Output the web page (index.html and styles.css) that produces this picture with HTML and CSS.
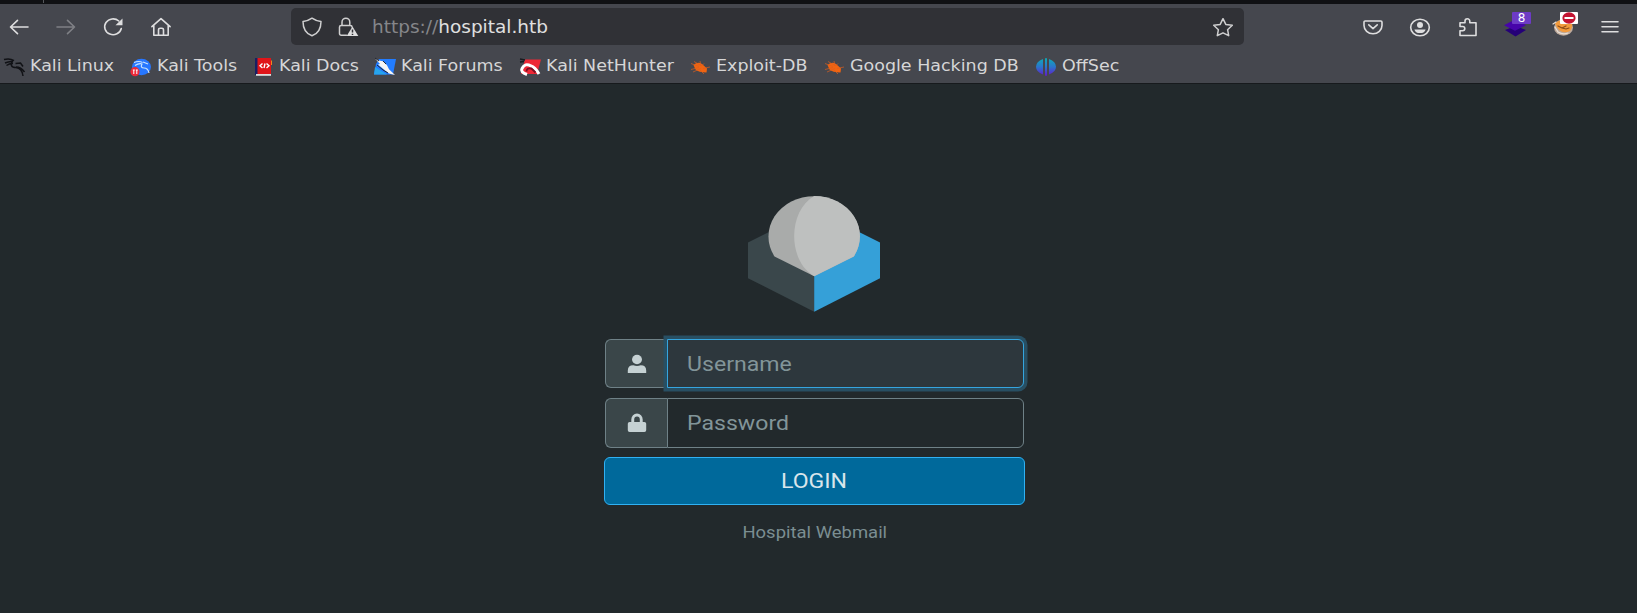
FILE: index.html
```html
<!DOCTYPE html>
<html lang="en">
<head>
<meta charset="utf-8">
<title>Hospital Webmail</title>
<link rel="stylesheet" href="styles.css">
</head>
<body>
<div class="tabstrip"><span class="tab-separator"></span></div>
<header class="chrome">
  <div class="toolbar">
    <nav class="nav-buttons">
      <svg class="icon" viewBox="0 0 20 20"><path d="M19 10H1.5M8.5 3.3 1.5 10l7 6.7"/></svg>
      <svg class="icon dim" viewBox="0 0 20 20"><path d="M1 10h17.5M11.5 3.3l7 6.7-7 6.7"/></svg>
      <svg class="icon" viewBox="0 0 20 20"><path d="M18.3 11.5A8.4 7.9 0 1 1 15.8 4"/><path class="solid" d="M19.5 1.6v6.6h-7z"/></svg>
      <svg class="icon" viewBox="0 0 20 20"><path d="M.9 9.7 10 1.6l9.1 8.1M2.8 8.5v9.8h14.4V8.5M7.5 18v-5.2q0-1.6 1.6-1.6h1.8q1.6 0 1.6 1.6V18"/></svg>
    </nav>
    <div class="urlbar">
      <svg class="icon" viewBox="0 0 20 20"><path d="M10 1.2q4.2 3 9 3.2c0 6.800-2.500 12-9 14.400C3.500 16.400 1 11.200 1 4.400q4.800-.2 9-3.200z"/></svg>
      <svg class="icon lock" viewBox="0 0 20 20"><path d="M8.500 18.200H3.200q-1.700 0-1.700-1.700V10q0-1.600 1.700-1.600h9.300q1.500 0 1.500 1.600M4 8.300V5.200a3.900 4 0 0 1 7.800 0v3.100"/><path class="solid" d="M14.500 9.600 20.300 19H8.700z"/><path class="mark" d="M14.500 12.400v3.200M14.500 16.700v1.200"/></svg>
      <span class="url"><span class="wide"><span class="scheme">https://</span>hospital.htb</span></span>
      <svg class="icon star" viewBox="0 0 22 20"><path d="m11 1.700 2.800 5.700 6.500.9-4.700 4.400 1.100 6-5.700-2.900-5.700 2.900 1.100-6L1.700 8.300l6.500-.9z"/></svg>
    </div>
    <div class="actions">
      <svg class="icon" viewBox="0 0 22 20"><path d="M3.200 4h15.600q1.200 0 1.200 1.200V8.500a9 8.300 0 0 1-18 0V5.200Q2 4 3.200 4zM6.800 7.900l4.200 3.700 4.200-3.700"/></svg>
      <svg class="icon" viewBox="0 0 22 20"><ellipse cx="11" cy="10.500" rx="9.300" ry="8.300"/><circle class="solid" cx="11" cy="7.900" r="3"/><path class="solid" d="M5.400 12.400h11.200q-.8 3.700-5.600 3.700t-5.600-3.700z"/></svg>
      <svg class="icon" viewBox="0 0 22 20"><path d="M3 18.500v-4.800h2.700a2 2 0 0 0 0-4.200H3V5.800h5V4.200a2.400 2.500 0 0 1 4.800 0v1.600h6.200v12.700z"/></svg>
      <div class="extension">
        <svg class="icon" viewBox="0 0 22 20"><path class="layer-low" d="m1 13 10.500-4L22 13l-10.500 6.500z"/><path class="layer-top" d="m0 8.200 11-5.700 11 5.700-11 5.500z"/></svg>
        <span class="badge count">8</span>
      </div>
      <div class="extension">
        <svg class="icon cookie" viewBox="0 0 22 20"><ellipse class="crust" cx="11.500" cy="10.500" rx="9.500" ry="8.300"/><path class="glaze" d="M3 6q5-4 9-2t8 2q1 4-2 8-6 3-11-1-3-3-4-7z"/><path class="shine" d="m1 7 3-2M3 10l3 5q5 3 10 1"/><path class="face" d="m6 9 4 2 4-2M10 11l4 1 3-1"/></svg>
        <span class="badge blocked"><svg viewBox="0 0 18 12"><ellipse cx="9" cy="6" rx="6.600" ry="5.700" fill="#c31432"/><path d="M4.500 5h9v2h-9z" fill="#fff"/></svg></span>
      </div>
      <svg class="icon" viewBox="0 0 22 20"><path d="M3 4.800h16M3 9.800h16M3 14.800h16"/></svg>
    </div>
  </div>
  <nav class="bookmarks">
    <a class="bookmark linux"><svg viewBox="0 0 22 20"><path d="M1 2.500q6-1.500 10 1.200M2 6q4-2 8-1.500M3.500 8.500Q7 6 10 6.500M9.500 4Q6 10.500 13 10.500q6 .5 7 8.500M12.500 6.500l5-.5 2.500 3.500M13 10q5 0 8.500 5" fill="none" stroke="#111216" stroke-width="1.500"/></svg><span class="wide">Kali Linux</span></a>
    <a class="bookmark tools"><svg viewBox="0 0 22 20"><ellipse cx="11.500" cy="10" rx="9.500" ry="8.300" fill="#2777ff"/><path d="M4 5.500q5-2 8.500 0M5 8.500q4-2.500 7-1.500-2 4 2 4t5 5M13 5l5 2" fill="none" stroke="#c9e3ff" stroke-width="1.200"/><circle cx="5" cy="14.700" r="4.600" fill="#ed2939"/><path d="M2.800 13h2M3.800 13v4M5.800 13h2M6.800 13v4" stroke="#fff" stroke-width="1"/></svg><span class="wide">Kali Tools</span></a>
    <a class="bookmark docs"><svg viewBox="0 0 18 20"><path d="M0 1h5v17H0z" fill="#182064"/><path d="M2.500 1H16v16H2.500z" fill="#e01519"/><path d="M1 17h15v1.800H1z" fill="#ddd"/><path d="m16 3 1 1v4h-1z" fill="#ef8621"/><path d="M7.500 6.500 5 8.800l2.500 2.200M11.500 6.500 14 8.800l-2.500 2.200M10 6.500l-1 4.500" fill="none" stroke="#fff" stroke-width="1.400"/></svg><span class="wide">Kali Docs</span></a>
    <a class="bookmark forums"><svg viewBox="0 0 22 20"><path d="M5 2h17l-3 15.500H0L2 7z" fill="#227cff"/><path d="m1 10 12 7.500H0z" fill="#27a5ed"/><path d="m1 1.500 4 2 4 .8 4 4 2 4 6 5.700-6-1.500-5-4-6-5 2-.5z" fill="#f5f5f5"/><path d="m1 1 4 3M3 8l6 5 5 3M9 4l3 3" fill="none" stroke="#222733" stroke-width="1"/></svg><span class="wide">Kali Forums</span></a>
    <a class="bookmark nethunter"><svg viewBox="0 0 22 20"><path d="M6 2.500h16L18 17H2z" fill="#ed2835"/><path d="M1 2l5 1M1 5l4-.5" stroke="#191b20" stroke-width="1.500"/><path d="M8 17.500Q1 15 3 11.500 6 5.500 12 9q4 1 8 8" fill="none" stroke="#fff" stroke-width="3"/><path d="M7.500 14.500q0-4 5-3l4 4" fill="none" stroke="#771124" stroke-width="1.800"/></svg><span class="wide">Kali NetHunter</span></a>
    <a class="bookmark exploit"><svg viewBox="0 0 20 20"><path d="M3.500 8Q8 4 12 7l5 4.500-.5 4q-8 0-11-3z" fill="#f16411"/><path d="m1 6.500 8 3M4 4.500l7 4M1 12.500l8-2M3 15l8-3.500M10 4l1 5M14 6.500l-2 2M20 10l-7 1.500M10 13l4 4" stroke="#d95f20" stroke-width=".7"/></svg><span class="wide">Exploit-DB</span></a>
    <a class="bookmark google"><svg viewBox="0 0 20 20"><path d="M3.500 8Q8 4 12 7l5 4.500-.5 4q-8 0-11-3z" fill="#f16411"/><path d="m1 6.500 8 3M4 4.500l7 4M1 12.500l8-2M3 15l8-3.500M10 4l1 5M14 6.500l-2 2M20 10l-7 1.500M10 13l4 4" stroke="#d95f20" stroke-width=".7"/></svg><span class="wide">Google Hacking DB</span></a>
    <a class="bookmark offsec"><svg viewBox="0 0 20 20"><defs><linearGradient id="dusk" x2="0" y2="1"><stop stop-color="#0eabb5"/><stop offset=".5" stop-color="#2b75cc"/><stop offset="1" stop-color="#621bcb"/></linearGradient></defs><path d="M7 2v15.500Q0 15 0 9.800T7 2zM13 2v15.500Q20 15 20 9.800T13 2zM9 1.200h2v17.500H9z" fill="url(#dusk)"/></svg><span class="wide">OffSec</span></a>
  </nav>
</header>
<main class="login">
  <svg class="logo" viewBox="0 0 132 116">
    <path fill="#3a474b" d="M0 46.500 22 35.500 66.200 60v55.800L0 82.200z"/>
    <path fill="#35a0d8" d="M132 46.500 110 35.500 66.200 60v55.800L132 82.200z"/>
    <path fill="#a9abaa" d="M26.500 60.500A45.700 40.300 0 1 1 105.800 60.500L66.200 80.300z"/>
    <path fill="#bec0bf" d="M66.200 0A45.600 40.300 0 0 1 105.800 60.500L66.200 80.300C39.500 65 39.500 15 66.200 0z"/>
  </svg>
  <form class="form">
    <label class="field focused">
      <span class="prefix"><svg viewBox="0 0 20 20"><ellipse cx="10" cy="5.500" rx="5" ry="4.700"/><path d="M.8 19v-2.500q0-5.200 5.500-5.200 3.700 1.300 7.400 0 5.500 0 5.500 5.200V19z"/></svg></span>
      <span class="input"><span class="wide">Username</span></span>
    </label>
    <label class="field">
      <span class="prefix"><svg viewBox="0 0 20 20"><path fill-rule="evenodd" d="M4.300 9V6.500a5.700 6 0 0 1 11.400 0V9h1.700q1.800 0 1.800 1.800v6.400q0 1.800-1.800 1.800H2.600Q.8 19 .8 17.200v-6.400Q.8 9 2.600 9zM7.200 9h5.600V6.500a2.800 3 0 0 0-5.600 0z"/></svg></span>
      <span class="input"><span class="wide">Password</span></span>
    </label>
    <div class="submit"><span class="wide">LOGIN</span></div>
  </form>
  <div class="product"><span class="wide">Hospital Webmail</span></div>
</main>
</body>
</html>
```

FILE: styles.css
```css
* { box-sizing: border-box; }
body { margin: 0; height: 613px; overflow: hidden; background: #22292c; }
svg { display: block; flex: none; overflow: visible; }
.wide { display: inline-block; transform: scaleX(1.1); transform-origin: left; }

.tabstrip { height: 4px; background: #101114; }
.tab-separator { display: block; width: 1px; height: 3px; margin-left: 43px; background: #55575b; }

.chrome { height: 80px; background: #45474e; border-bottom: 1px solid #171a1d; font-family: "DejaVu Sans", sans-serif; color: #d6d6d7; }
.toolbar { display: flex; align-items: center; height: 46px; }
.icon { width: 20px; height: 20px; fill: none; stroke: #dededf; stroke-width: 1.6; stroke-linecap: round; stroke-linejoin: round; }
.icon .solid { fill: #dededf; stroke: none; }
.icon .mark { stroke: #303136; stroke-width: 1.5; stroke-linecap: butt; }
.dim { opacity: .38; }
.nav-buttons { display: flex; gap: 27.200px; width: 290.500px; padding-left: 9px; flex: none; }
.urlbar { display: flex; align-items: center; flex: none; width: 953px; height: 37px; margin-bottom: 1px; padding: 0 10px 0 11px; border-radius: 5px; background: #303136; }
.urlbar .icon { stroke: #cfcfd0; stroke-width: 1.5; }
.urlbar .lock { margin-left: 16px; }
.url { margin-left: 14px; flex: 1; font-size: 17px; line-height: 22px; padding-top: 1px; color: #e0e0e0; white-space: nowrap; }
.url .wide { transform: scaleX(1.087); }
.scheme { color: #85868a; }
.urlbar .star { width: 22px; }
.actions { display: flex; gap: 25.500px; margin-left: 118px; }
.actions .icon { width: 22px; }
.extension { position: relative; width: 22px; }
.extension .layer-low { fill: #250077; stroke: none; }
.extension .layer-top { fill: #4704aa; stroke: none; }
.badge { position: absolute; left: 8px; top: -5px; width: 19px; height: 12px; border-radius: 1px; }
.count { background: #6d3bc5; color: #fff; font-size: 12px; line-height: 12px; text-align: center; }
.blocked { background: #fff; width: 18px; }
.actions .cookie .crust { fill: #bda99b; stroke: none; }
.actions .cookie .glaze { fill: #f39b3d; stroke: none; }
.cookie .shine { stroke: #e9dfd5; stroke-width: 1.200; }
.cookie .face { stroke: #8b4b18; stroke-width: 1.200; }

.bookmarks { display: flex; height: 33px; padding-left: 3px; font-size: 16px; line-height: 32px; white-space: nowrap; }
.bookmark { display: flex; align-items: center; flex: none; width: 127px; height: 33px; }
.bookmark .wide { margin-top: -1px; transform: scaleX(1.092); }
.bookmark svg { width: 22px; height: 20px; margin: 0 5px 0 0; }
.bookmark.tools { width: 124.500px; }
.bookmark.docs { width: 119px; }
.bookmark.docs svg { width: 18px; margin-right: 6px; }
.bookmark.forums { width: 145px; }
.bookmark.forums svg { margin-right: 5.500px; }
.bookmark.nethunter { width: 171.500px; }
.bookmark.exploit { width: 134px; }
.bookmark.google { width: 212px; }
.bookmark.exploit svg, .bookmark.google svg, .bookmark.offsec svg { width: 20px; margin-right: 6px; }

.login { display: flex; flex-direction: column; align-items: center; padding-top: 111.500px; padding-right: 8px; font-family: Roboto, sans-serif; }
.logo { width: 132px; height: 116px; margin-right: .5px; }
.form { width: 421px; margin-top: 27.500px; }
.field { display: flex; width: 419px; height: 49px; margin: 0 1px 10px; font-size: 21px; }
.field + .field { height: 50px; margin-bottom: 9px; }
.prefix { display: flex; align-items: center; justify-content: center; width: 62px; border: 1px solid #6f8187; border-right: 0; border-radius: 6px 0 0 6px; background: #3a4649; }
.prefix svg { width: 20px; height: 20px; fill: #c5d1d3; }
.input { display: flex; align-items: center; flex: 1; padding-left: 19px; border: 1px solid #6f8187; border-radius: 0 6px 6px 0; color: #829599; }
.focused .input { border-color: #35a5df; background: #2d373d; box-shadow: 0 0 0 3.500px #284f63; }
.submit { height: 48px; border: 1px solid #30b1f3; border-radius: 6px; background: #00699b; color: #d9e5eb; font-size: 21px; line-height: 46px; text-align: center; }
.submit .wide, .product .wide { transform-origin: center; }
.product { margin-top: 17px; color: #7b8e92; font-size: 16.800px; line-height: 20px; }
```
